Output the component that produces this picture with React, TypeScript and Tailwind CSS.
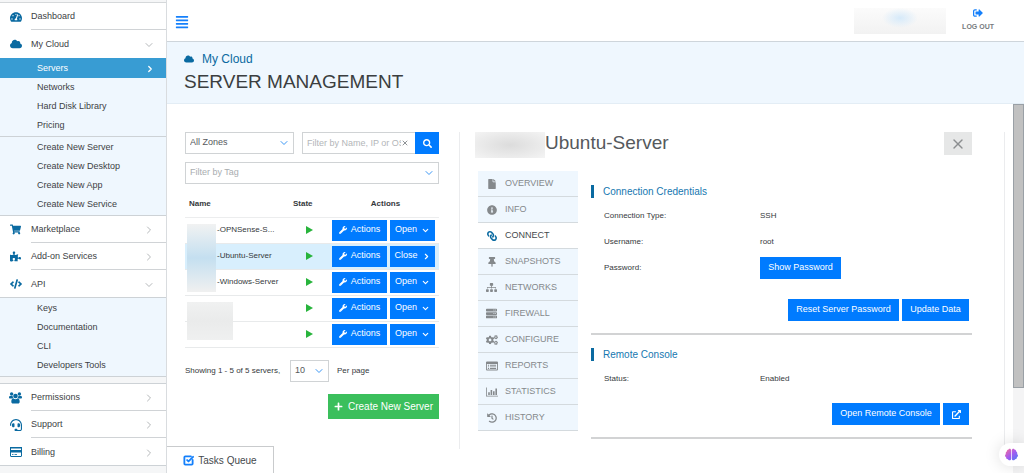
import type { ReactNode } from "react";
import { clsx } from "clsx";
import {
  FaAlignJustify, FaBrain, FaCloud, FaCode, FaCogs, FaExternalLinkAlt, FaFile, FaHeadset, FaHistory,
  FaInfoCircle, FaLink, FaPlus, FaPuzzlePiece, FaSearch, FaServer, FaShoppingCart,
  FaSignOutAlt, FaSitemap, FaTachometerAlt, FaThumbtack, FaWrench,
} from "react-icons/fa";
import { ChevronDown, ChevronRight, SquareCheckBig, X } from "lucide-react";

const CardIcon = () => (
  <svg width="12" height="10" viewBox="0 0 12 10">
    <rect x="0.5" y="0.5" width="11" height="9" rx="0.5" fill="#fff" stroke="#0a6aa1" />
    <path d="M0 0h12v1.6H0zM0 3h12v2.6H0z" fill="#0a6aa1" />
    <path d="M2 7.5h1.5M4.5 7.5h2.5" stroke="#0a6aa1" strokeWidth="0.8" />
  </svg>
);

const PeopleIcon = () => (
  <svg width="13" height="12" viewBox="0 0 13 12" fill="currentColor">
    <circle cx="2.6" cy="2" r="1.7" />
    <circle cx="10.4" cy="2" r="1.7" />
    <circle cx="6.5" cy="4" r="2.3" />
    <path d="M0 5.6C0 4.4.6 4 1.4 4h2.2c.1 1.2.5 2 1.1 2.6H1.2C.5 6.600 0 6.300 0 5.600zM13 5.600C13 4.400 12.400 4 11.600 4H9.400c-.1 1.200-.5 2-1.100 2.600h3.500c.7 0 1.200-.3 1.200-1z" />
    <path d="M2.300 9.800c0-2 .8-3.200 2.200-3.200.6.5 1.200.7 2 .7s1.400-.2 2-.7c1.400 0 2.200 1.200 2.200 3.200 0 1.200-.7 1.800-1.700 1.800H4c-1 0-1.700-.6-1.700-1.800z" />
  </svg>
);

const ReportIcon = () => (
  <svg width="12" height="10" viewBox="0 0 12 10" fill="currentColor">
    <path fillRule="evenodd" d="M1 .5h10a1 1 0 0 1 1 1v7a1 1 0 0 1-1 1H1a1 1 0 0 1-1-1v-7a1 1 0 0 1 1-1zM.9 3v5.600h10.200V3z" />
    <path d="M1.900 3.800H3v.9H1.900zM3.900 3.800h6.200v.9H3.900zM1.900 5.400H3v.9H1.900zM3.900 5.400h6.200v.9H3.900zM1.900 7H3v.9H1.900zM3.900 7h6.200v.9H3.900z" />
  </svg>
);

const ChartIcon = () => (
  <svg width="12" height="10" viewBox="0 0 12 10" fill="currentColor">
    <path d="M0 0.5h0.8v8.2H12v0.8H0zM2.2 5.2h1.6v2.8H2.2zM4.6 3h1.6v5H4.6zM7 4.2h1.6V8H7zM9.4 1.5H11V8H9.4z" />
  </svg>
);

const RunningIcon = () => (
  <svg width="7" height="8" viewBox="0 0 7 8" className="mx-auto" role="img" aria-label="Running">
    <path d="M0 0l7 4-7 4z" fill="#28b43c" />
  </svg>
);

const SERVER_LINKS = ["Networks", "Hard Disk Library", "Pricing"];
const CREATE_LINKS = ["Create New Server", "Create New Desktop", "Create New App", "Create New Service"];
const API_LINKS = ["Keys", "Documentation", "CLI", "Developers Tools"];

const SERVERS = [
  { id: 1, name: "-OPNSense-S..." },
  { id: 2, name: "-Ubuntu-Server", open: true },
  { id: 3, name: "-Windows-Server" },
  { id: 4, name: "" },
  { id: 5, name: "" },
];

const TABS = [
  { icon: <FaFile size={10} />, label: "OVERVIEW" },
  { icon: <FaInfoCircle size={10} />, label: "INFO" },
  { icon: <FaLink size={10} className="-scale-x-100" />, label: "CONNECT", active: true },
  { icon: <FaThumbtack size={10} />, label: "SNAPSHOTS" },
  { icon: <FaSitemap size={11} />, label: "NETWORKS" },
  { icon: <FaServer size={11} />, label: "FIREWALL" },
  { icon: <FaCogs size={12} />, label: "CONFIGURE" },
  { icon: <ReportIcon />, label: "REPORTS" },
  { icon: <ChartIcon />, label: "STATISTICS" },
  { icon: <FaHistory size={10} />, label: "HISTORY" },
];

type NavItemProps = { icon: ReactNode; label: string; arrow?: "right" | "down"; line?: boolean };

function NavItem({ icon, label, arrow, line }: NavItemProps) {
  return (
    <a href="#" className="flex h-[27px] items-stretch bg-white">
      <span className="flex w-[31px] shrink-0 items-center justify-center text-[#0a6aa1]">{icon}</span>
      <span className={clsx("flex flex-1 items-center justify-between pt-0.5 pr-[11px]", line && "border-b border-[#d0d3d6]")}>
        {label}
        {arrow === "right" && <ChevronRight size={12} strokeWidth={2} className="text-[#b5b8ba]" />}
        {arrow === "down" && <ChevronDown size={12} strokeWidth={2} className="text-[#b5b8ba]" />}
      </span>
    </a>
  );
}

function SubLinks({ items }: { items: string[] }) {
  return (
    <ul>
      {items.map((item) => (
        <li key={item}>
          <a href="#" className="flex h-[19px] items-center pt-px pl-[37px]">{item}</a>
        </li>
      ))}
    </ul>
  );
}

function Sidebar() {
  return (
    <nav className="w-[167px] shrink-0 overflow-hidden border-r border-[#d9dcdf] bg-[#f5f6f7] text-[9px] text-[#3d4144]">
      <div className="h-[3px] border-b border-[#d5d8da]" />
      <NavItem icon={<FaTachometerAlt size={12} />} label="Dashboard" line />
      <div className="h-7 bg-white"><NavItem icon={<FaCloud size={12} />} label="My Cloud" arrow="down" /></div>
      <a href="#" className="flex h-5 items-center justify-between bg-[#389cd3] pt-px pr-[11px] pl-[37px] text-white">
        Servers
        <ChevronRight size={10} strokeWidth={3} />
      </a>
      <div className="border-b border-[#cdd2d6] bg-[#eff7fe] pb-px"><SubLinks items={SERVER_LINKS} /></div>
      <div className="border-b border-[#cdd2d6] bg-[#eff7fe] py-px"><SubLinks items={CREATE_LINKS} /></div>
      <NavItem icon={<FaShoppingCart size={11} />} label="Marketplace" arrow="right" line />
      <NavItem icon={<FaPuzzlePiece size={11} />} label="Add-on Services" arrow="right" line />
      <NavItem icon={<FaCode size={12} />} label="API" arrow="down" />
      <div className="border-y border-[#cdd2d6] bg-[#eff7fe] py-px"><SubLinks items={API_LINKS} /></div>
      <div className="h-[7px] border-b border-[#cdd2d6]" />
      <NavItem icon={<PeopleIcon />} label="Permissions" arrow="right" line />
      <NavItem icon={<FaHeadset size={12} />} label="Support" arrow="right" line />
      <div className="border-b border-[#cdd2d6]"><NavItem icon={<CardIcon />} label="Billing" arrow="right" /></div>
    </nav>
  );
}

type PickerProps = { label: string; options: string[]; className?: string; muted?: boolean };

function Picker({ label, options, className, muted }: PickerProps) {
  return (
    <div className={clsx("relative", className)}>
      <select
        aria-label={label}
        className={clsx("block h-[22px] w-full appearance-none rounded-none border border-[#d0d3d5] bg-white pl-1 text-[9px]", muted ? "text-[#a9adb0]" : "text-[#55595c]")}
      >
        {options.map((o) => <option key={o}>{o}</option>)}
      </select>
      <ChevronDown size={12} strokeWidth={2} className="pointer-events-none absolute top-[5px] right-1 text-[#3b97f5]" />
    </div>
  );
}

function Button({ children, className, label }: { children: ReactNode; className?: string; label?: string }) {
  return (
    <button type="button" aria-label={label} className={clsx("flex items-center justify-center bg-[#007bff] text-[9px] text-white", className)}>
      {children}
    </button>
  );
}

function ServerList() {
  return (
    <section className="w-[254px] shrink-0">
      <div className="flex gap-2">
        <Picker label="Zone" options={["All Zones"]} className="w-[109px]" />
        <div className="flex flex-1">
          <div className="relative flex-1">
            <input
              aria-label="Filter servers"
              placeholder="Filter by Name, IP or OS"
              className="block h-[22px] w-full border border-r-0 border-[#d0d3d5] pr-[10px] pl-1 text-[9px] placeholder:text-[#b3b6b9]"
            />
            <X size={8} strokeWidth={3} className="absolute top-[7px] right-[6px] bg-white text-[#8f9396]" />
          </div>
          <Button label="Search" className="h-[22px] w-6"><FaSearch size={9} /></Button>
        </div>
      </div>
      <Picker label="Tag" options={["Filter by Tag"]} className="mt-2" muted />

      <table className="mt-2 w-full table-fixed border-collapse text-[8px] text-[#35393c]">
        <thead>
          <tr className="h-[25px] border-b border-[#ecedee]">
            <th className="w-[102px] pl-1 text-left">Name</th>
            <th className="w-[45px] pl-[6px] text-left">State</th>
            <th>Actions</th>
          </tr>
        </thead>
        <tbody>
          {SERVERS.map((s) => (
            <tr key={s.id} className={clsx("h-[26px] border-b border-[#e8eaeb]", s.open && "bg-[#d8effd]")}>
              <td className="relative p-0 pl-8 whitespace-nowrap">
                {/* customer prefix is redacted */}
                {s.id === 1 && (
                  <span className="absolute top-1.5 left-0.5 z-10 h-[68px] w-[29px] bg-linear-to-b from-[#f1f2f2] via-[#c4dff0] to-[#f0f0f0]" />
                )}
                {s.id === 4 && (
                  <span className="absolute top-1.5 left-0.5 z-10 h-[38px] w-[46px] bg-linear-to-b from-[#f0f1f1] via-[#eaebeb] to-[#eff0f0]" />
                )}
                {s.name}
              </td>
              <td className="p-0"><RunningIcon /></td>
              <td className="p-0">
                <div className="flex gap-[3px]">
                  <Button className="h-[21px] w-[55px] gap-1"><FaWrench size={8} />Actions</Button>
                  <Button className="h-[21px] w-[45px] gap-1">
                    {s.open ? "Close" : "Open"}
                    {s.open ? <ChevronRight size={9} strokeWidth={3} /> : <ChevronDown size={9} strokeWidth={3} />}
                  </Button>
                </div>
              </td>
            </tr>
          ))}
        </tbody>
      </table>

      <div className="mt-3 flex items-center text-[8px] text-[#35393c]">
        <span className="w-[105px]">Showing 1 - 5 of 5 servers,</span>
        <Picker label="Servers per page" options={["10"]} className="w-[39px]" />
        <span className="ml-2">Per page</span>
      </div>
      <Button className="mt-3 ml-auto h-[25px] w-[111px] gap-[5px] bg-[#3bbf5c]! text-[10px]!"><FaPlus size={9} />Create New Server</Button>
    </section>
  );
}

function SectionTitle({ children }: { children: ReactNode }) {
  return <h3 className="border-l-[3px] border-[#0a6aa1] pl-[9px] text-[10px] leading-[13px] text-[#1577b0]">{children}</h3>;
}

function Field({ name, children }: { name: string; children: ReactNode }) {
  return (
    <div className="flex h-[26px] items-center pl-[13px]">
      <dt className="w-[156px] shrink-0">{name}</dt>
      <dd>{children}</dd>
    </div>
  );
}

function ServerDetails() {
  return (
    <section className="ml-5 min-w-0 flex-1 self-stretch border-x border-[#ebecee] pr-8 pl-[15px]">
      <header className="flex h-[26px] items-start justify-between">
        <h2 className="flex items-start text-[19px] leading-[22px] text-[#55595c]">
          <span className="h-[26px] w-[70px] bg-radial from-[#dcdcdc] to-[#f4f4f4]" />
          Ubuntu-Server
        </h2>
        <button type="button" aria-label="Close" className="flex h-[23px] w-7 items-center justify-center bg-[#e6e7e7] text-[#8b8e90]">
          <X size={16} strokeWidth={2} />
        </button>
      </header>
      <div className="mt-[13px] flex items-start pl-[3px]">
        <nav className="w-[100px] shrink-0 text-[9px] text-[#85898c]">
          {TABS.map((t) => (
            <a
              key={t.label}
              href="#"
              className={clsx("flex h-[26px] items-center border-b border-[#d4dade]", t.active ? "bg-white text-[#45494c]" : "bg-[#eff7fe]")}
            >
              <span className={clsx("flex w-[27px] justify-center", t.active && "text-[#0a6aa1]")}>{t.icon}</span>
              {t.label}
            </a>
          ))}
        </nav>
        <div className="ml-[13px] min-w-0 flex-1 pt-[14px] text-[8px] text-[#35393c]">
          <SectionTitle>Connection Credentials</SectionTitle>
          <dl className="mt-[5px]">
            <Field name="Connection Type:">SSH</Field>
            <Field name="Username:">root</Field>
            <Field name="Password:"><Button className="h-[22px] w-[81px]">Show Password</Button></Field>
          </dl>
          <div className="mt-[18px] flex justify-end gap-[3px] border-b-2 border-[#d2d3d4] pr-[3px] pb-3">
            <Button className="h-[22px] w-[111px]">Reset Server Password</Button>
            <Button className="h-[22px] w-[67px]">Update Data</Button>
          </div>
          <div className="mt-[13px]"><SectionTitle>Remote Console</SectionTitle></div>
          <dl className="mt-[5px]"><Field name="Status:">Enabled</Field></dl>
          <div className="mt-[11px] flex justify-end gap-[3px] border-b-2 border-[#d2d3d4] pr-[3px] pb-3">
            <Button className="h-[22px] w-[108px]">Open Remote Console</Button>
            <Button label="Open in new window" className="h-[22px] w-[26px]"><FaExternalLinkAlt size={9} /></Button>
          </div>
        </div>
      </div>
    </section>
  );
}

export default function App() {
  return (
    <div className="flex h-screen overflow-hidden bg-white font-['Liberation_Sans',Arial,sans-serif]">
      <Sidebar />
      <main className="flex min-w-0 flex-1 flex-col">
        <div className="flex h-[42px] shrink-0 items-center border-b border-[#ced5db] pr-[30px] pl-2">
          <button type="button" aria-label="Toggle menu" className="pt-0.5 text-[#1580fb]"><FaAlignJustify size={14} /></button>
          {/* account name is redacted */}
          <div className="ml-auto flex h-[26px] w-[92px] justify-center bg-linear-to-b from-[#fbfbfb] to-[#f2f2f2]">
            <span className="h-5 w-9 bg-radial from-[#d6eafa] to-transparent to-70%" />
          </div>
          <a href="#" className="ml-4 flex flex-col items-center gap-1 text-[7px] font-bold text-[#777b7e]">
            <FaSignOutAlt size={10} className="text-[#1580fb]" />
            LOG OUT
          </a>
        </div>
        <header className="h-[62px] shrink-0 border-b border-[#e3edf5] bg-[#eff7fe] pt-[9px] pl-[17px]">
          <a href="#" className="flex items-center gap-2 text-[12px] leading-4 text-[#0a6aa1]"><FaCloud size={10} />My Cloud</a>
          <h1 className="mt-1 text-[19px] leading-[22px] text-[#3b3e40]">SERVER MANAGEMENT</h1>
        </header>
        <div className="flex min-h-0 flex-1">
          <div className="flex min-w-0 flex-1 items-start pt-7 pr-2 pb-6 pl-[18px]">
            <ServerList />
            <ServerDetails />
          </div>
          <div className="w-[11px] shrink-0 bg-[#f4f4f5]">
            <div className="h-[77%] border border-[#9aa0a6] bg-[#c1c1c1]" />
          </div>
        </div>
      </main>

      <button type="button" className="fixed bottom-0 left-[167px] flex h-[27px] w-[107px] items-center justify-center gap-1 border-t border-r border-[#c9cbcd] bg-white text-[10px] text-[#45494c]">
        <SquareCheckBig size={11} strokeWidth={4} className="text-[#1580fb]" />
        Tasks Queue
      </button>
      <button type="button" aria-label="Assistant" className="fixed right-0 bottom-[7px] flex h-[23px] w-[25px] items-center rounded-l-full bg-white pl-1.5 shadow-[0_0_16px_#00000022]">
        <svg width="0" height="0" className="absolute">
          <linearGradient id="brain" x1="0" y1="0" x2="1" y2="1">
            <stop offset="0" stopColor="#ff6f91" />
            <stop offset="0.5" stopColor="#a45cf0" />
            <stop offset="1" stopColor="#4a7df5" />
          </linearGradient>
        </svg>
        <FaBrain size={13} fill="url(#brain)" />
      </button>
    </div>
  );
}
